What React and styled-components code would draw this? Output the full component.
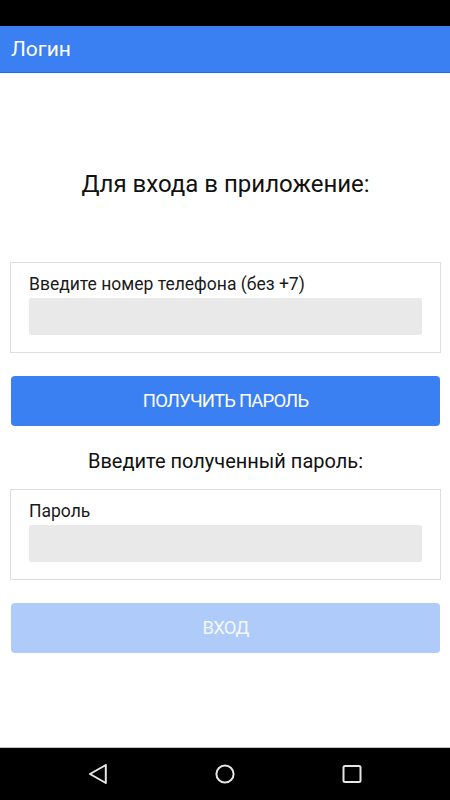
import React from "react";
import styled, { createGlobalStyle } from "styled-components";

const GlobalStyle = createGlobalStyle`
    html, body {
        margin: 0;
        padding: 0;
        background: #ffffff;
    }
    body {
        font-family: Roboto, "Noto Sans", "Liberation Sans", sans-serif;
        -webkit-font-smoothing: antialiased;
    }
    * {
        box-sizing: border-box;
    }
`;

const Screen = styled.div`
    width: 450px;
    height: 800px;
    display: flex;
    flex-direction: column;
    background: #ffffff;
    overflow: hidden;
`;

const StatusBar = styled.div`
    height: 26px;
    flex-shrink: 0;
    background: #000000;
`;

const Toolbar = styled.header`
    height: 47px;
    flex-shrink: 0;
    display: flex;
    align-items: center;
    padding-left: 11px;
    background: #3a80f2;
    border-bottom: 1px solid #1f6ee6;
    color: #ffffff;
    font-size: 21px;
    line-height: 1;
`;

const Content = styled.main`
    flex: 1;
    display: flex;
    flex-direction: column;
    padding: 0 9px 0 10px;
`;

const Title = styled.h1`
    margin: 97px 0 0;
    text-align: center;
    font-size: 24px;
    font-weight: 400;
    line-height: 28px;
    color: #111111;
`;

const Card = styled.section`
    margin-top: ${(p) => p.$top}px;
    display: flex;
    flex-direction: column;
    gap: 3px;
    padding: 11px 18px 17px;
    border: 1px solid #dedede;
`;

const Label = styled.label`
    font-size: 17.5px;
    line-height: 21px;
    color: #1a1a1a;
`;

const Field = styled.input`
    height: 37px;
    width: 100%;
    border: none;
    outline: none;
    border-radius: 2px;
    background: #e9e9e9;
    padding: 0 8px;
    font-family: inherit;
    font-size: 18px;
`;

const Button = styled.button`
    margin: ${(p) => p.$top}px 1px 0 1px;
    height: 50px;
    border: none;
    border-radius: 4px;
    background: ${(p) => (p.disabled ? "#aecbf9" : "#3a80f2")};
    color: ${(p) => (p.disabled ? "#f4f8ff" : "#ffffff")};
    font-family: inherit;
    font-size: 18.5px;
    letter-spacing: -0.8px;
    font-weight: 400;
    text-transform: uppercase;
    cursor: pointer;
`;

const Hint = styled.p`
    margin: 24px 0 0;
    text-align: center;
    font-size: 20px;
    line-height: 23px;
    color: #111111;
`;

const NavBar = styled.nav`
    height: 53px;
    flex-shrink: 0;
    display: grid;
    grid-template-columns: 1fr 1fr 1fr;
    align-items: center;
    justify-items: center;
    padding: 0 34px;
    background: #000000;
    border-top: 1px solid #c4c4c4;
`;

const NavIcon = styled.svg`
    width: 24px;
    height: 24px;
    fill: none;
    stroke: #e6e6e6;
    stroke-width: 2;
    stroke-linejoin: round;
`;

const App = () => {
    return (
        <Screen>
            <GlobalStyle />
            <StatusBar />
            <Toolbar>Логин</Toolbar>
            <Content>
                <Title>Для входа в приложение:</Title>
                <Card $top={64}>
                    <Label>Введите номер телефона (без +7)</Label>
                    <Field type="tel" />
                </Card>
                <Button type="button" $top={23}>Получить пароль</Button>
                <Hint>Введите полученный пароль:</Hint>
                <Card $top={16}>
                    <Label>Пароль</Label>
                    <Field type="password" />
                </Card>
                <Button type="button" $top={23} disabled>Вход</Button>
            </Content>
            <NavBar>
                <NavIcon viewBox="0 0 24 24">
                    <path d="M19.8 3 L4 12 L19.8 21 Z" />
                </NavIcon>
                <NavIcon viewBox="0 0 24 24">
                    <circle cx="12" cy="12" r="8.6" />
                </NavIcon>
                <NavIcon viewBox="0 0 24 24">
                    <rect x="3.5" y="4" width="17" height="16" rx="1.5" />
                </NavIcon>
            </NavBar>
        </Screen>
    );
};

export default App;
